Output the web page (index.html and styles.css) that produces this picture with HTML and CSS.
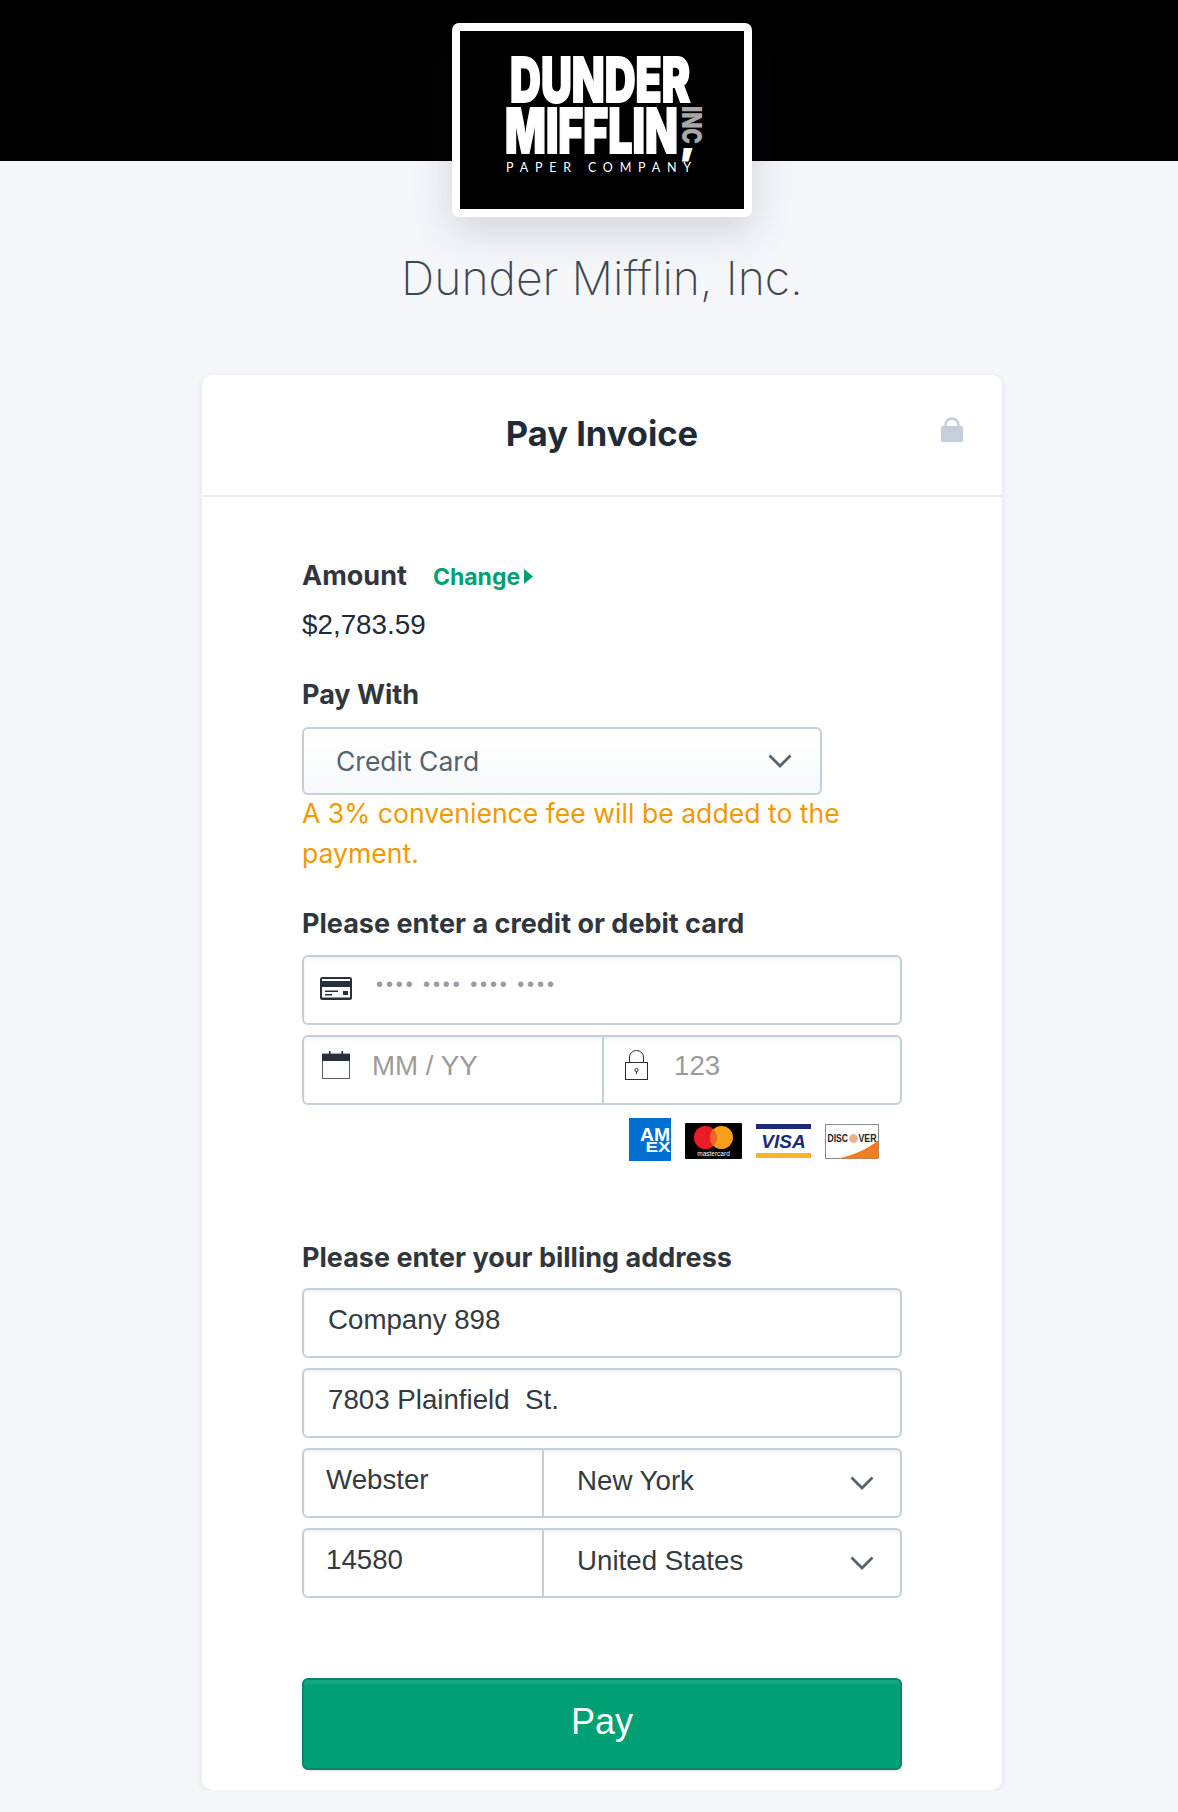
FILE: index.html
```html
<!DOCTYPE html>
<html>
<head>
    <meta charset="utf-8">
    <title>Pay Invoice</title>
    <link rel="stylesheet" href="styles.css">
</head>
<body>
    <div class="banner">
        <div class="logoBox">
            <svg class="logo" width="284" height="178" viewBox="0 0 284 178">
                <rect width="284" height="178" fill="#000"/>
                <g font-family="'Inter', sans-serif" font-weight="900" fill="#fff" stroke="#fff" stroke-width="1.8">
                    <text transform="translate(50 71) scale(.69 1)" font-size="62">DUNDER</text>
                    <text transform="translate(45 122) scale(.69 1)" font-size="62">MIFFLIN</text>
                    <text x="221" y="122" font-size="36">,</text>
                </g>
                <text transform="translate(222 75) rotate(90) scale(.78 1)" font-family="'Inter', sans-serif" font-weight="900" font-size="27" fill="#a8a8a8">INC</text>
                <text x="46" y="141" font-family="'Lato', sans-serif" font-size="12.5" letter-spacing="6.8" fill="#fff">PAPER COMPANY</text>
            </svg>
        </div>
    </div>

    <h1 class="company">Dunder Mifflin, Inc.</h1>

    <div class="card">
        <div class="cardHeader">
            <h2 class="cardTitle">Pay Invoice</h2>
            <svg class="headerLock" width="22" height="25" viewBox="0 0 22 25">
                <path d="M4.5 11V8a6.5 6.5 0 0 1 13 0v3" fill="none" stroke="#c5cfdb" stroke-width="2.6"/>
                <rect y="9" width="22" height="16" rx="1.5" fill="#c5cfdb"/>
            </svg>
        </div>

        <div class="cardBody">
            <div class="amountRow">
                <span class="label">Amount</span>
                <a class="changeLink">Change</a>
                <svg class="changeArrow" width="9" height="15" viewBox="0 0 9 15"><path d="M0 0l9 7.5L0 15z" fill="#00a075"/></svg>
            </div>
            <div class="amountValue">$2,783.59</div>

            <div class="label payWith">Pay With</div>
            <div class="selectBox">
                <span>Credit Card</span>
                <svg width="24" height="14" viewBox="0 0 24 14"><path d="M1.5 1.5L12 12 22.5 1.5" fill="none" stroke="#56626c" stroke-width="2.8"/></svg>
            </div>
            <div class="feeNote">A 3% convenience fee will be added to the payment.</div>

            <div class="label cardLabel">Please enter a credit or debit card</div>
            <div class="field cardNumber">
                <svg width="32" height="23" viewBox="0 0 32 23">
                    <rect width="32" height="23" rx="2.5" fill="#25303c"/>
                    <rect x="2" y="2" width="28" height="2" fill="#fff"/>
                    <rect x="2" y="10" width="28" height="10.5" fill="#fff"/>
                    <rect x="5" y="13.5" width="13" height="1.5" fill="#25303c"/>
                    <rect x="5" y="17" width="7" height="1.5" fill="#25303c"/>
                    <rect x="23" y="14" width="5" height="4" fill="#25303c"/>
                </svg>
                <span class="dots">•••• •••• •••• ••••</span>
            </div>
            <div class="field split">
                <div class="part expiry">
                    <svg width="28" height="28" viewBox="0 0 28 28">
                        <rect x=".5" y="3" width="27" height="24.5" fill="#fff" stroke="#56626c"/>
                        <rect y="3" width="28" height="7" fill="#25303c"/>
                        <rect x="7" y="0" width="1.5" height="6" fill="#25303c"/>
                        <rect x="19.5" y="0" width="1.5" height="6" fill="#25303c"/>
                    </svg>
                    <span class="placeholder">MM / YY</span>
                </div>
                <div class="part cvc">
                    <svg width="23" height="30" viewBox="0 0 23 30">
                        <path d="M4.5 12V7a7 6.5 0 0 1 14 0v5" fill="none" stroke="#25303c" stroke-width="1"/>
                        <rect x=".5" y="12.5" width="22" height="17" fill="#fff" stroke="#25303c"/>
                        <circle cx="11.5" cy="20" r="1.6" fill="none" stroke="#25303c"/>
                        <rect x="11" y="21" width="1" height="3" fill="#25303c"/>
                    </svg>
                    <span class="placeholder">123</span>
                </div>
            </div>

            <div class="brands">
                <svg width="42" height="43" viewBox="0 0 42 43">
                    <rect width="42" height="43" fill="#016fd0"/>
                    <g font-family="'Liberation Sans', sans-serif" font-weight="700" fill="#fff">
                        <text transform="translate(11 23) scale(1.05 1)" font-size="18.5">AM</text>
                        <text transform="translate(16.5 34) scale(1.25 1)" font-size="15">EX</text>
                    </g>
                </svg>
                <svg width="57" height="36" viewBox="0 0 57 36">
                    <rect width="57" height="36" rx="1" fill="#000"/>
                    <circle cx="20.5" cy="14.5" r="11.5" fill="#eb1c26"/>
                    <circle cx="36.5" cy="14.5" r="11.5" fill="#f79e1b"/>
                    <path d="M28.5 6.2a11.5 11.5 0 0 1 0 16.6a11.5 11.5 0 0 1 0-16.6z" fill="#f2642b"/>
                    <text x="28.5" y="33" text-anchor="middle" font-family="'Liberation Sans', sans-serif" font-size="6.5" fill="#fff">mastercard</text>
                </svg>
                <svg width="55" height="34" viewBox="0 0 55 34">
                    <rect width="55" height="5" fill="#1a2a78"/>
                    <rect y="29" width="55" height="5" fill="#f7b32b"/>
                    <text x="27.5" y="24" text-anchor="middle" font-family="'Liberation Sans', sans-serif" font-size="19" font-weight="700" font-style="italic" fill="#1a2a78">VISA</text>
                </svg>
                <svg width="54" height="35" viewBox="0 0 54 35">
                    <rect x=".5" y=".5" width="53" height="34" fill="#fff" stroke="#8a8a8a"/>
                    <path d="M13 34.5C30 31 44 24 53.5 16v18.5z" fill="#ef7d22"/>
                    <circle cx="28.5" cy="14.5" r="4.4" fill="#eeb088"/>
                    <text transform="translate(2.5 18) scale(.78 1)" font-family="'Liberation Sans', sans-serif" font-size="11" font-weight="700" fill="#222">DISC</text>
                    <text transform="translate(33.5 18) scale(.8 1)" font-family="'Liberation Sans', sans-serif" font-size="11" font-weight="700" fill="#222">VER</text>
                </svg>
            </div>

            <div class="label billingLabel">Please enter your billing address</div>
            <div class="fieldStack">
                <div class="field wideText">Company 898</div>
                <div class="field wideText">7803 Plainfield&nbsp; St.</div>
                <div class="field split">
                    <div class="part city">Webster</div>
                    <div class="part pick">
                        <span>New York</span>
                        <svg width="24" height="14" viewBox="0 0 24 14"><path d="M1.5 1.5L12 12 22.5 1.5" fill="none" stroke="#56626c" stroke-width="2.8"/></svg>
                    </div>
                </div>
                <div class="field split">
                    <div class="part city">14580</div>
                    <div class="part pick">
                        <span>United States</span>
                        <svg width="24" height="14" viewBox="0 0 24 14"><path d="M1.5 1.5L12 12 22.5 1.5" fill="none" stroke="#56626c" stroke-width="2.8"/></svg>
                    </div>
                </div>
            </div>

            <button class="payButton" type="button">Pay</button>
        </div>
    </div>
</body>
</html>
```

FILE: styles.css
```css
body {
    margin: 0;
    background: #f4f6fa;
    font-family: "Inter", "Liberation Sans", sans-serif;
    color: #333a40;
}

/* the page content sits 13px right of the window centre */
.banner {
    box-sizing: border-box;
    height: 161px;
    padding-left: 26px;
    background: #000;
    display: flex;
    justify-content: center;
    align-items: flex-start;
}

.logoBox {
    margin-top: 23px;
    border: 8px solid #fff;
    border-radius: 7px;
    background: #000;
    box-shadow: 0 14px 40px rgba(30, 40, 60, 0.16);
    display: flex;
}

.company {
    margin: 89px 0 0;
    padding-left: 26px;
    height: 56px;
    line-height: 56px;
    text-align: center;
    font-size: 46.3px;
    font-weight: 250;
    color: #3c4650;
}

.card {
    width: 800px;
    margin: 69px 0 0 202px;
    background: #fff;
    border-radius: 10px;
    box-shadow: 0 2px 6px rgba(30, 40, 60, 0.1);
}

.cardHeader {
    height: 120px;
    border-bottom: 2px solid #e8eaed;
    display: grid;
    grid-template-columns: 1fr auto 1fr;
}

.cardTitle {
    grid-column: 2;
    margin: 0;
    line-height: 117px;
    font-size: 34.5px;
    font-weight: 700;
    color: #212b36;
}

.headerLock {
    grid-column: 3;
    justify-self: end;
    margin: 42px 39px 0 0;
}

.cardBody {
    padding: 59px 100px 20px 100px;
}

.label {
    font-size: 27px;
    font-weight: 700;
    line-height: 40px;
    color: #30363c;
}

.amountRow {
    display: flex;
    align-items: center;
}

.changeLink {
    margin: 2px 0 0 26px;
    font-size: 23px;
    font-weight: 700;
    color: #00a075;
}

.changeArrow {
    margin-left: 4px;
}

.amountValue {
    margin-top: 9px;
    line-height: 40px;
    font-family: "Liberation Sans", sans-serif;
    font-size: 27.8px;
    color: #212b36;
}

.payWith {
    margin-top: 30px;
}

.selectBox {
    box-sizing: border-box;
    width: 520px;
    height: 68px;
    margin-top: 12px;
    padding: 0 28px 0 32px;
    border: 2px solid #c5cfdb;
    border-radius: 6px;
    background: linear-gradient(#fff, #f7f8fa);
    display: flex;
    justify-content: space-between;
    align-items: center;
    font-size: 26.5px;
    color: #56626c;
}

.feeNote {
    margin-top: -2px;
    font-size: 26.6px;
    line-height: 40px;
    color: #f09a00;
}

.cardLabel {
    margin-top: 31px;
    margin-bottom: 11px;
}

.field {
    box-sizing: border-box;
    height: 70px;
    border: 2px solid #c5cfdb;
    border-radius: 6px;
    background: #fff;
    box-shadow: inset 0 2px 3px rgba(30, 40, 60, 0.07);
    font-family: "Liberation Sans", sans-serif;
    font-size: 27.7px;
    color: #333a40;
}

.cardNumber {
    padding: 20px 0 0 16px;
    display: flex;
    align-items: flex-start;
}

.dots {
    margin: -4px 0 0 24px;
    font-size: 20px;
    letter-spacing: 2.9px;
    word-spacing: -1px;
    color: #9b9b9b;
}

.split {
    margin-top: 10px;
    display: flex;
}

.part {
    box-sizing: border-box;
    height: 100%;
    display: flex;
    align-items: flex-start;
    line-height: 40px;
    padding-top: 10px;
}

.expiry {
    width: 300px;
    border-right: 2px solid #c5cfdb;
    padding: 9px 0 0 18px;
    gap: 22px;
}

.expiry svg {
    margin-top: 5px;
}

.cvc {
    flex: 1;
    padding: 9px 0 0 21px;
    gap: 26px;
}

.cvc svg {
    margin-top: 4px;
}

.placeholder {
    color: #9b9b9b;
}

.brands {
    height: 43px;
    margin-top: 13px;
    padding-right: 23px;
    display: flex;
    justify-content: flex-end;
    align-items: center;
    gap: 14px;
}

.brands svg + svg {
    margin-top: 3px;
}

.billingLabel {
    margin-top: 77px;
    margin-bottom: 10px;
}

.fieldStack {
    display: flex;
    flex-direction: column;
    gap: 10px;
}

.fieldStack .split {
    margin-top: 0;
}

.wideText {
    padding-left: 24px;
    line-height: 40px;
    padding-top: 10px;
}

.city {
    width: 240px;
    padding-left: 22px;
    border-right: 2px solid #c5cfdb;
}

.pick {
    flex: 1;
    padding: 11px 26px 0 33px;
    justify-content: space-between;
}

.pick svg {
    margin-top: 15px;
}

.payButton {
    display: block;
    width: 100%;
    height: 92px;
    margin-top: 80px;
    padding-bottom: 6px;
    border: 2px solid #0d8270;
    border-radius: 6px;
    background: #00a075;
    box-shadow: inset 0 4px 0 #12a881, 0 1px 2px rgba(30, 40, 60, 0.15);
    font-family: "Liberation Sans", sans-serif;
    font-size: 36px;
    color: #fff;
}
```
